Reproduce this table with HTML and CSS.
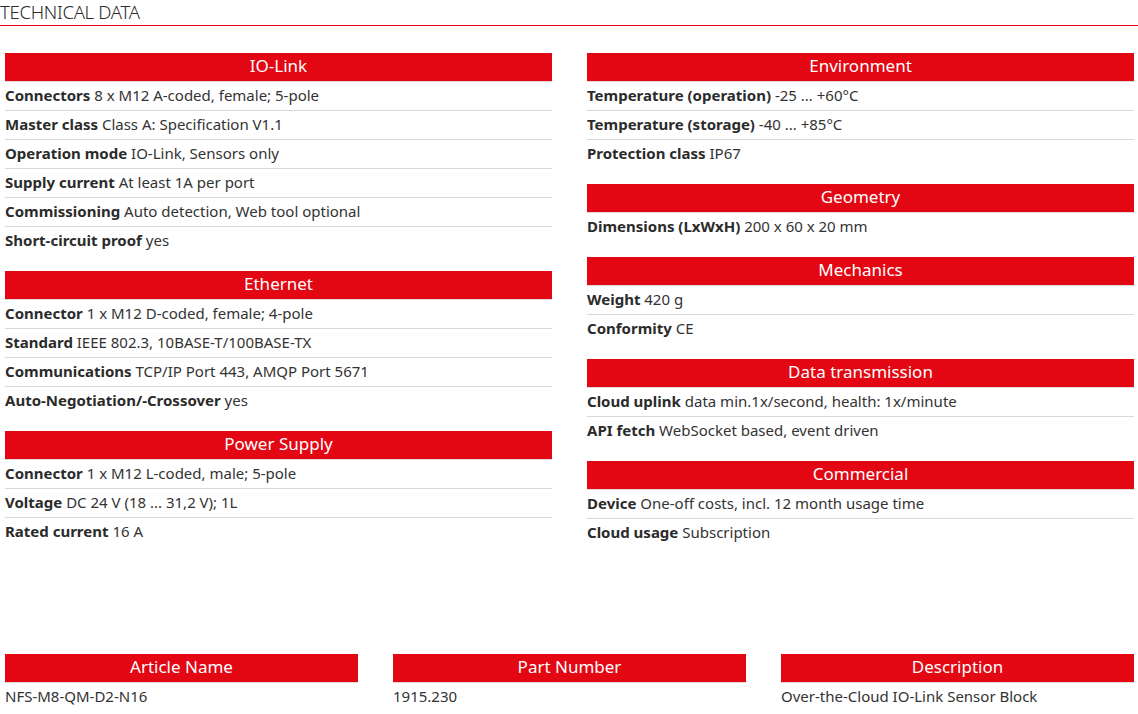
FILE: index.html
```html
<!DOCTYPE html>
<html lang="en">
<head>
<meta charset="utf-8">
<title>Technical Data</title>
<link rel="stylesheet" href="styles.css">
</head>
<body>
<h2 class="page-title">TECHNICAL DATA</h2>
<div class="columns">
  <div class="col">
    <section class="group">
      <h3 class="group-head">IO-Link</h3>
      <div class="row"><b>Connectors</b> 8 x M12 A-coded, female; 5-pole</div>
      <div class="row"><b>Master class</b> Class A: Specification V1.1</div>
      <div class="row"><b>Operation mode</b> IO-Link, Sensors only</div>
      <div class="row"><b>Supply current</b> At least 1A per port</div>
      <div class="row"><b>Commissioning</b> Auto detection, Web tool optional</div>
      <div class="row"><b>Short-circuit proof</b> yes</div>
    </section>
    <section class="group">
      <h3 class="group-head">Ethernet</h3>
      <div class="row"><b>Connector</b> 1 x M12 D-coded, female; 4-pole</div>
      <div class="row"><b>Standard</b> IEEE 802.3, 10BASE-T/100BASE-TX</div>
      <div class="row"><b>Communications</b> TCP/IP Port 443, AMQP Port 5671</div>
      <div class="row"><b>Auto-Negotiation/-Crossover</b> yes</div>
    </section>
    <section class="group">
      <h3 class="group-head">Power Supply</h3>
      <div class="row"><b>Connector</b> 1 x M12 L-coded, male; 5-pole</div>
      <div class="row"><b>Voltage</b> DC 24 V (18 ... 31,2 V); 1L</div>
      <div class="row"><b>Rated current</b> 16 A</div>
    </section>
  </div>
  <div class="col">
    <section class="group">
      <h3 class="group-head">Environment</h3>
      <div class="row"><b>Temperature (operation)</b> -25 ... +60°C</div>
      <div class="row"><b>Temperature (storage)</b> -40 ... +85°C</div>
      <div class="row"><b>Protection class</b> IP67</div>
    </section>
    <section class="group">
      <h3 class="group-head">Geometry</h3>
      <div class="row"><b>Dimensions (LxWxH)</b> 200 x 60 x 20 mm</div>
    </section>
    <section class="group">
      <h3 class="group-head">Mechanics</h3>
      <div class="row"><b>Weight</b> 420 g</div>
      <div class="row"><b>Conformity</b> CE</div>
    </section>
    <section class="group">
      <h3 class="group-head">Data transmission</h3>
      <div class="row"><b>Cloud uplink</b> data min.1x/second, health: 1x/minute</div>
      <div class="row"><b>API fetch</b> WebSocket based, event driven</div>
    </section>
    <section class="group">
      <h3 class="group-head">Commercial</h3>
      <div class="row"><b>Device</b> One-off costs, incl. 12 month usage time</div>
      <div class="row"><b>Cloud usage</b> Subscription</div>
    </section>
  </div>
</div>
<div class="summary">
  <section class="group">
    <h3 class="group-head">Article Name</h3>
    <div class="row">NFS-M8-QM-D2-N16</div>
  </section>
  <section class="group">
    <h3 class="group-head">Part Number</h3>
    <div class="row">1915.230</div>
  </section>
  <section class="group">
    <h3 class="group-head">Description</h3>
    <div class="row">Over-the-Cloud IO-Link Sensor Block</div>
  </section>
</div>
</body>
</html>
```
FILE: styles.css
```css
* { box-sizing: border-box; }
html, body { margin: 0; padding: 0; background: #fff; }
body {
  font-family: "Noto Sans", "Open Sans", sans-serif;
  color: #333;
  font-size: 15px;
}
.page-title {
  margin: 0;
  height: 26px;
  padding-top: 1px;
  font-weight: 300;
  font-size: 18.5px;
  line-height: 22px;
  color: #2a2a2a;
  border-bottom: 1px solid #e30613;
  letter-spacing: -0.3px;
}
.columns {
  display: grid;
  grid-template-columns: 1fr 1fr;
  column-gap: 35px;
  padding: 27px 4px 0 5px;
}
.group { margin-bottom: 16px; }
.group-head {
  margin: 0;
  height: 29px;
  padding-bottom: 3px;
  background: #e30613;
  color: #fff;
  font-weight: 400;
  font-size: 17px;
  line-height: 25px;
  text-align: center;
  border-bottom: 1px solid #e2d6d6;
}
.row {
  height: 29px;
  padding-bottom: 2px;
  line-height: 26px;
  border-bottom: 1px solid #d9d9d9;
  white-space: nowrap;
}
.row:last-child { border-bottom: none; height: 28px; }
.row b { font-weight: 700; color: #2b2b2b; }
.summary {
  display: grid;
  grid-template-columns: 1fr 1fr 1fr;
  column-gap: 35px;
  padding: 91px 4px 0 5px;
}
.summary .group { margin-bottom: 0; }
.summary .row { border-bottom: none; }
```
